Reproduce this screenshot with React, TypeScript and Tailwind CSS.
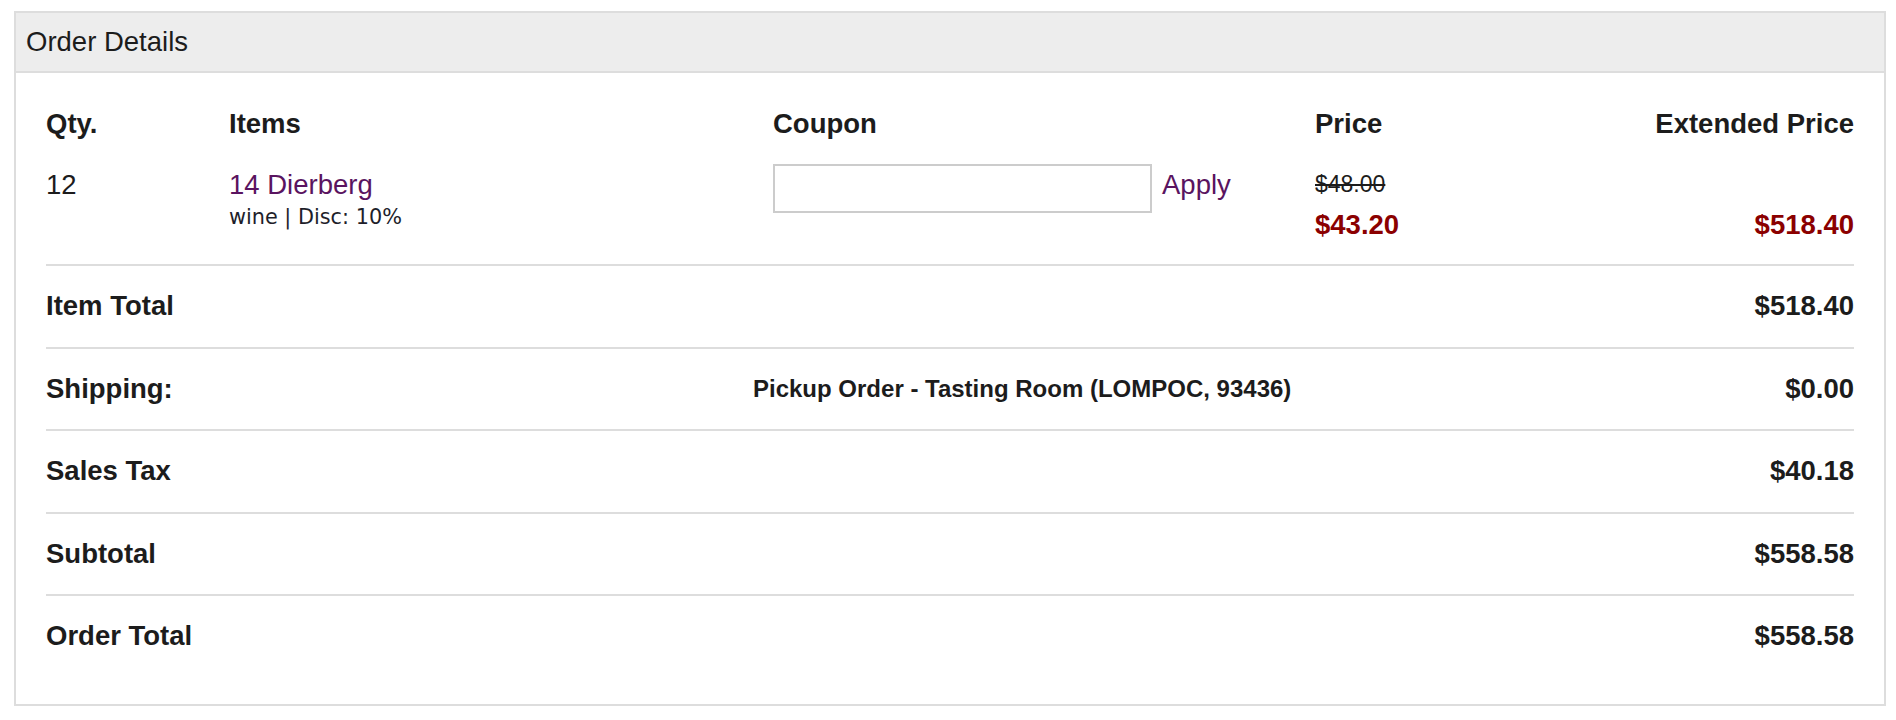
import React from "react";

const totals: { label: string; value: string; middle?: string }[] = [
  { label: "Item Total", value: "$518.40" },
  { label: "Shipping:", value: "$0.00", middle: "Pickup Order - Tasting Room (LOMPOC, 93436)" },
  { label: "Sales Tax", value: "$40.18" },
  { label: "Subtotal", value: "$558.58" },
  { label: "Order Total", value: "$558.58" },
];

export default function App() {
  return (
    <div className="min-h-[720px] bg-white pt-[11px] text-[#1c1c1c]" style={{ fontFamily: '"Liberation Sans", Arial, sans-serif' }}>
      <div className="ml-[14px] w-[1872px] border-2 border-[#dddddd]">
        <div className="flex h-[60px] items-center border-b-2 border-[#dddddd] bg-[#ededed] px-[10px] text-[27.5px] leading-[32px]">
          Order Details
        </div>
        <div className="px-[30px] pt-[35px] pb-[27px]">
          <div className="grid grid-cols-[183px_544px_542px_1fr_1fr] text-[27.5px] font-bold leading-[32px]">
            <div>Qty.</div>
            <div>Items</div>
            <div>Coupon</div>
            <div>Price</div>
            <div className="text-right">Extended Price</div>
          </div>
          <div className="mt-[24px] grid grid-cols-[183px_544px_542px_1fr_1fr] items-start border-b-2 border-[#dddddd] pb-[23px]">
            <div className="pt-[5px] text-[27.5px] leading-[32px]">12</div>
            <div className="pt-[5px]">
              <div className="text-[27.5px] leading-[32px] text-[#5a1460]">14 Dierberg</div>
              <div className="mt-[4px] text-[20.8px] leading-[24px] text-[#1e1e2a]" style={{ fontFamily: '"DejaVu Sans", Verdana, sans-serif' }}>
                wine | Disc: 10%
              </div>
            </div>
            <div className="flex items-start gap-[10px]">
              <input className="h-[49px] w-[379px] border-2 border-[#cccccc] bg-white outline-none" />
              <span className="pt-[5px] text-[27.5px] leading-[32px] text-[#5a1460]">Apply</span>
            </div>
            <div className="pt-[6px]">
              <div className="text-[23px] leading-[28px] line-through">$48.00</div>
              <div className="mt-[11px] text-[27.5px] font-bold leading-[32px] text-[#8b0000]">$43.20</div>
            </div>
            <div className="pt-[45px] text-right text-[27.5px] font-bold leading-[32px] text-[#8b0000]">$518.40</div>
          </div>
          {totals.map((t, i) => (
            <div
              key={t.label}
              className={
                "grid grid-cols-[707px_1fr_auto] items-center py-[24px] text-[27.5px] font-bold leading-[32.5px] " +
                (i < totals.length - 1 ? "border-b-2 border-[#dddddd]" : "")
              }
            >
              <div>{t.label}</div>
              <div className="text-[24px]">{t.middle ?? ""}</div>
              <div className="text-right">{t.value}</div>
            </div>
          ))}
        </div>
      </div>
    </div>
  );
}
